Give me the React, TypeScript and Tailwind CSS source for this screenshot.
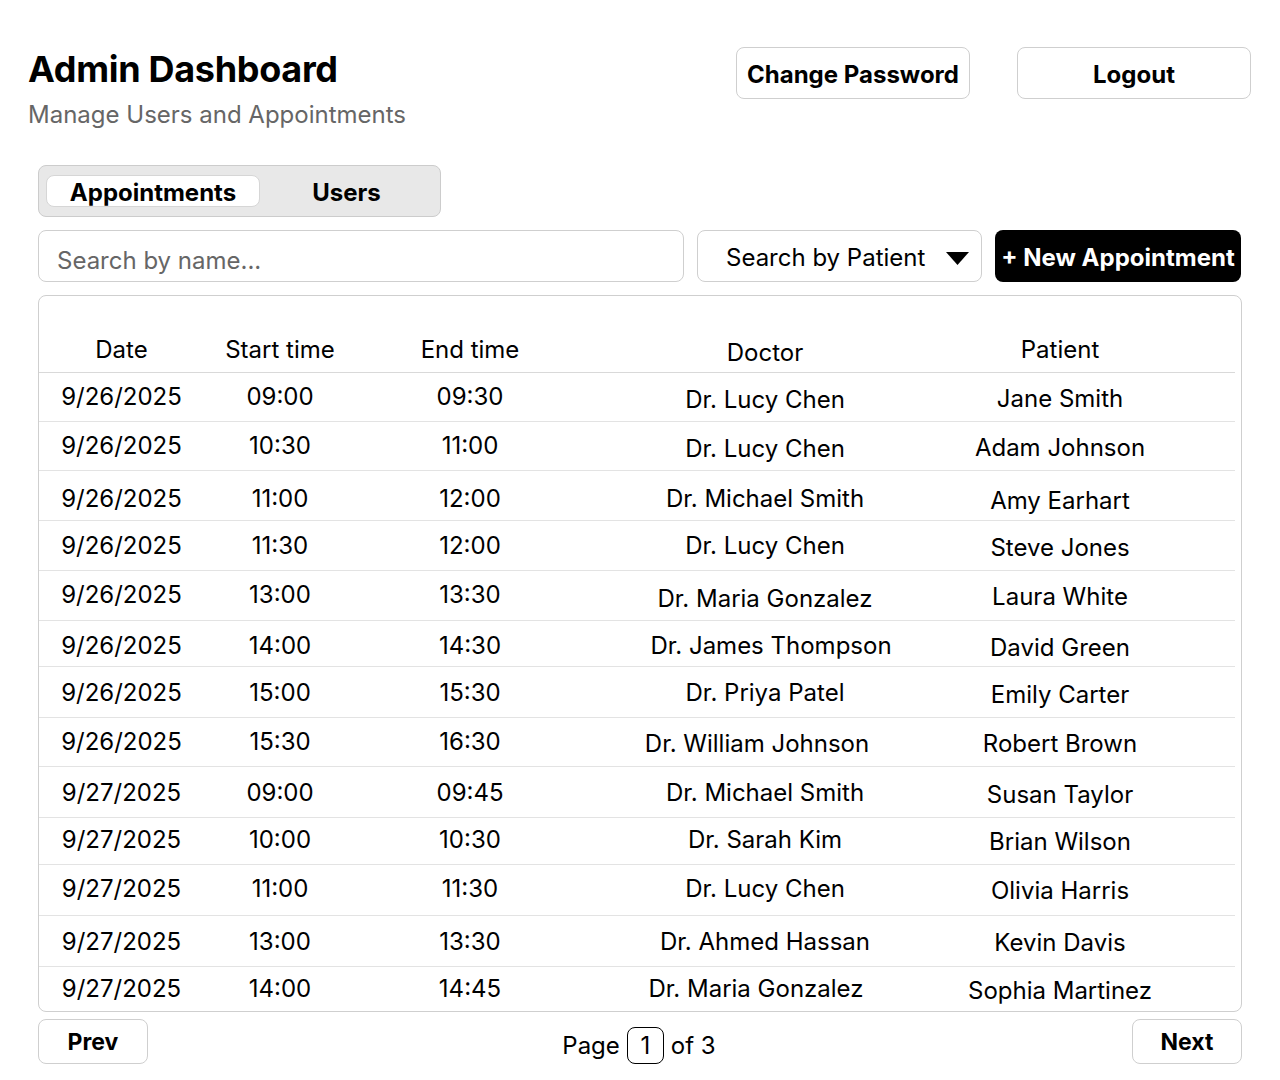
import React from 'react';

type Appt = {
  date: string;
  start: string;
  end: string;
  doctor: string;
  patient: string;
  // row height, text centres (from the row's top line) and doctor x nudge
  h: number;
  a: number;
  d: number;
  p: number;
  dx?: number;
};

const appointments: Appt[] = [
  { date: '9/26/2025', start: '09:00', end: '09:30', doctor: 'Dr. Lucy Chen', patient: 'Jane Smith', h: 48, a: 23, d: 26, p: 25 },
  { date: '9/26/2025', start: '10:30', end: '11:00', doctor: 'Dr. Lucy Chen', patient: 'Adam Johnson', h: 49, a: 23, d: 26, p: 25 },
  { date: '9/26/2025', start: '11:00', end: '12:00', doctor: 'Dr. Michael Smith', patient: 'Amy Earhart', h: 50, a: 27, d: 27, p: 29 },
  { date: '9/26/2025', start: '11:30', end: '12:00', doctor: 'Dr. Lucy Chen', patient: 'Steve Jones', h: 50, a: 24, d: 24, p: 26 },
  { date: '9/26/2025', start: '13:00', end: '13:30', doctor: 'Dr. Maria Gonzalez', patient: 'Laura White', h: 50, a: 23, d: 27, p: 25 },
  { date: '9/26/2025', start: '14:00', end: '14:30', doctor: 'Dr. James Thompson', patient: 'David Green', h: 46, a: 24, d: 24, p: 26, dx: 6 },
  { date: '9/26/2025', start: '15:00', end: '15:30', doctor: 'Dr. Priya Patel', patient: 'Emily Carter', h: 51, a: 25, d: 25, p: 27 },
  { date: '9/26/2025', start: '15:30', end: '16:30', doctor: 'Dr. William Johnson', patient: 'Robert Brown', h: 49, a: 23, d: 25, p: 25, dx: -8 },
  { date: '9/27/2025', start: '09:00', end: '09:45', doctor: 'Dr. Michael Smith', patient: 'Susan Taylor', h: 51, a: 25, d: 25, p: 27 },
  { date: '9/27/2025', start: '10:00', end: '10:30', doctor: 'Dr. Sarah Kim', patient: 'Brian Wilson', h: 47, a: 21, d: 21, p: 23 },
  { date: '9/27/2025', start: '11:00', end: '11:30', doctor: 'Dr. Lucy Chen', patient: 'Olivia Harris', h: 51, a: 23, d: 23, p: 25 },
  { date: '9/27/2025', start: '13:00', end: '13:30', doctor: 'Dr. Ahmed Hassan', patient: 'Kevin Davis', h: 51, a: 25, d: 25, p: 26 },
  { date: '9/27/2025', start: '14:00', end: '14:45', doctor: 'Dr. Maria Gonzalez', patient: 'Sophia Martinez', h: 45, a: 21, d: 21, p: 23, dx: -9 },
];

const cols = 'grid grid-cols-[165px_152px_228px_362px_228px]';

const App: React.FC = () => {
  return (
    <div className="min-h-[1080px] bg-white text-black pt-[47px]" style={{ fontFamily: 'Inter, "Noto Sans", sans-serif' }}>
      {/* header */}
      <div className="flex justify-between pl-[28px] pr-[29px]">
        <div>
          <h1 className="text-[36px] leading-[44px] font-bold tracking-[-0.3px]">Admin Dashboard</h1>
          <p className="mt-[8px] text-[24px] leading-[32px] text-[#666666]">Manage Users and Appointments</p>
        </div>
        <div className="flex gap-[47px]">
          <button className="w-[234px] h-[52px] pt-[4px] rounded-[8px] border border-[#cfcfcf] bg-white text-[24px] font-bold">
            Change Password
          </button>
          <button className="w-[234px] h-[52px] pt-[4px] rounded-[8px] border border-[#cfcfcf] bg-white text-[24px] font-bold">
            Logout
          </button>
        </div>
      </div>

      <div className="px-[38px]">
        {/* tabs */}
        <div className="mt-[34px] w-[403px] h-[52px] rounded-[8px] border border-[#cccccc] bg-[#e8e8e8] flex items-center px-[7px]">
          <div className="w-[214px] h-[32px] pt-[4px] rounded-[8px] border border-[#d6d6d6] bg-white flex items-center justify-center text-[24px] font-bold">
            Appointments
          </div>
          <div className="flex-1 h-[32px] pt-[4px] flex items-center justify-center text-[24px] font-bold">Users</div>
        </div>

        {/* search row */}
        <div className="mt-[13px] flex gap-[13px] h-[52px]">
          <div className="w-[646px] rounded-[8px] border border-[#cfcfcf] flex items-center pl-[18px] pt-[10px] text-[24px] text-[#666666]">
            Search by name...
          </div>
          <div className="w-[285px] rounded-[8px] border border-[#cfcfcf] flex items-center pl-[28px] pt-[4px] gap-[21px] text-[24px]">
            <span>Search by Patient</span>
            <svg width="23" height="13" viewBox="0 0 23 13">
              <path d="M0 0 H23 L11.5 13 Z" fill="#000" />
            </svg>
          </div>
          <button className="w-[246px] pt-[4px] rounded-[8px] bg-black text-white text-[24px] font-bold">+ New Appointment</button>
        </div>

        {/* table */}
        <div className="mt-[13px] h-[717px] rounded-[8px] border border-[#cfcfcf] overflow-hidden">
          <div className="w-[1196px] text-[24px]">
            <div className={`${cols} h-[77px] border-b border-[#d9d9d9] text-center leading-[30px]`}>
              <div className="pt-[39px]">Date</div>
              <div className="pt-[39px]">Start time</div>
              <div className="pt-[39px]">End time</div>
              <div className="pt-[42px]">Doctor</div>
              <div className="pt-[39px]">Patient</div>
            </div>
            {appointments.map((r, i) => (
              <div
                key={i}
                className={`${cols} text-center leading-[30px] ${i > 0 ? 'border-t border-[#e3e3e3]' : ''}`}
                style={{ height: r.h }}
              >
                <div style={{ paddingTop: r.a - 14 }}>{r.date}</div>
                <div style={{ paddingTop: r.a - 14 }}>{r.start}</div>
                <div style={{ paddingTop: r.a - 14 }}>{r.end}</div>
                <div style={{ paddingTop: r.d - 14, paddingLeft: r.dx && r.dx > 0 ? r.dx * 2 : 0, paddingRight: r.dx && r.dx < 0 ? -r.dx * 2 : 0 }}>
                  {r.doctor}
                </div>
                <div style={{ paddingTop: r.p - 14 }}>{r.patient}</div>
              </div>
            ))}
          </div>
        </div>

        {/* pagination */}
        <div className="mt-[7px] flex items-end justify-between">
          <button className="w-[110px] h-[45px] pt-[2px] rounded-[8px] border border-[#cfcfcf] bg-white text-[23px] font-bold">Prev</button>
          <div className="flex items-center gap-[7px] text-[24px] pr-[2px]">
            <span>Page</span>
            <span className="w-[37px] h-[37px] rounded-[8px] border border-black flex items-center justify-center">1</span>
            <span>of 3</span>
          </div>
          <button className="w-[110px] h-[45px] pt-[2px] rounded-[8px] border border-[#cfcfcf] bg-white text-[23px] font-bold">Next</button>
        </div>
      </div>
    </div>
  );
};

export default App;
